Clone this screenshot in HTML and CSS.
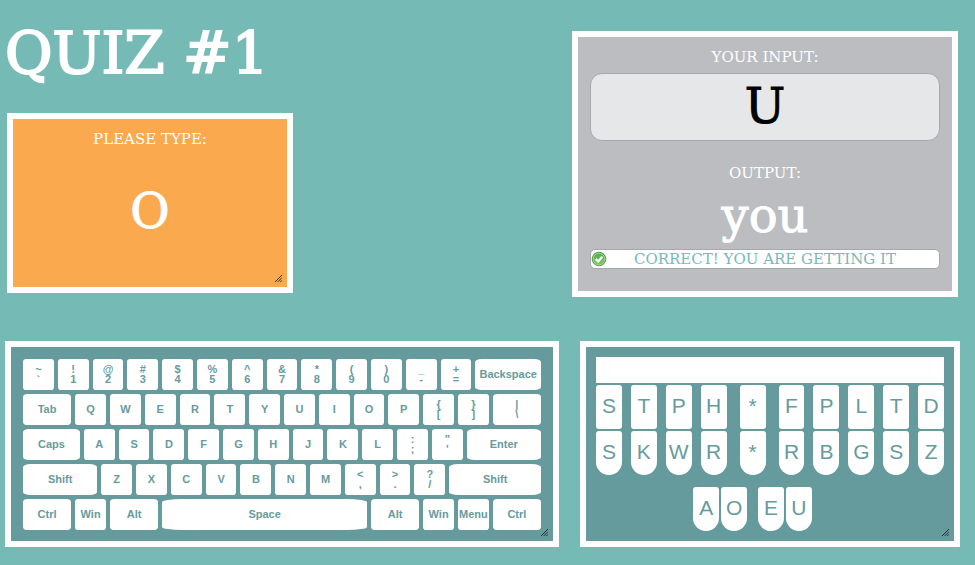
FILE: index.html
```
<!DOCTYPE html>
<html lang="en">
<head>
<meta charset="utf-8">
<title>Quiz #1</title>
<link rel="stylesheet" href="styles.css">
</head>
<body>
<main class="page">
  <section class="quiz">
    <h1 class="title">QUIZ #1</h1>
    <div class="panel prompt">
      <h2 class="caption">PLEASE TYPE:</h2>
      <p class="big">O</p>
      <svg class="grip" viewBox="0 0 8 8" aria-hidden="true"><path d="M0 8L8 0M3 8L8 3M6 8L8 6"/></svg>
    </div>
    <div class="panel answer">
      <label class="caption" for="typed">YOUR INPUT:</label>
      <input class="typed" id="typed" type="text" value="U">
      <h2 class="caption">OUTPUT:</h2>
      <output class="big word" for="typed">you</output>
      <p class="status">
        <svg class="tick" viewBox="0 0 16 16" aria-hidden="true">
          <defs><linearGradient id="green" x1="0" y1="0" x2="0" y2="1"><stop offset="0" stop-color="#4fae49"/><stop offset="1" stop-color="#84c766"/></linearGradient></defs>
          <circle cx="8" cy="8" r="6.8" fill="url(#green)" stroke="#3c8a38" stroke-width=".8"/>
          <circle cx="8" cy="8" r="5.8" fill="none" stroke="#a3d98c" stroke-width=".9"/>
          <path d="M4.7 8.1L7.2 10.4L11.4 5.8" fill="none" stroke="#fff" stroke-width="2.2"/>
        </svg>
        <span>CORRECT! YOU ARE GETTING IT</span>
      </p>
    </div>
  </section>

  <section class="boards">
    <div class="panel keyboard">
      <div class="keys">
        <button class="key">~<br>`</button><button class="key">!<br>1</button><button class="key">@<br>2</button><button class="key">#<br>3</button><button class="key">$<br>4</button><button class="key">%<br>5</button><button class="key">^<br>6</button><button class="key">&amp;<br>7</button><button class="key">*<br>8</button><button class="key">(<br>9</button><button class="key">)<br>0</button><button class="key">_<br>-</button><button class="key">+<br>=</button><button class="key u8">Backspace</button>
        <button class="key u6">Tab</button><button class="key">Q</button><button class="key">W</button><button class="key">E</button><button class="key">R</button><button class="key">T</button><button class="key">Y</button><button class="key">U</button><button class="key">I</button><button class="key">O</button><button class="key">P</button><button class="key">{<br>[</button><button class="key">}<br>]</button><button class="key u6">|<br>\</button>
        <button class="key u7">Caps</button><button class="key">A</button><button class="key">S</button><button class="key">D</button><button class="key">F</button><button class="key">G</button><button class="key">H</button><button class="key">J</button><button class="key">K</button><button class="key">L</button><button class="key">:<br>;</button><button class="key">"<br>'</button><button class="key u9">Enter</button>
        <button class="key u9">Shift</button><button class="key">Z</button><button class="key">X</button><button class="key">C</button><button class="key">V</button><button class="key">B</button><button class="key">N</button><button class="key">M</button><button class="key">&lt;<br>,</button><button class="key">&gt;<br>.</button><button class="key">?<br>/</button><button class="key u11">Shift</button>
        <button class="key u6">Ctrl</button><button class="key">Win</button><button class="key u6">Alt</button><button class="key u24">Space</button><button class="key u6">Alt</button><button class="key">Win</button><button class="key">Menu</button><button class="key u6">Ctrl</button>
      </div>
      <svg class="grip" viewBox="0 0 8 8" aria-hidden="true"><path d="M0 8L8 0M3 8L8 3M6 8L8 6"/></svg>
    </div>

    <div class="panel steno">
      <div class="number-bar"></div>
      <div class="row">
        <button class="steno-key">S</button><button class="steno-key">T</button><button class="steno-key">P</button><button class="steno-key">H</button><button class="steno-key star">*</button><button class="steno-key">F</button><button class="steno-key">P</button><button class="steno-key">L</button><button class="steno-key">T</button><button class="steno-key">D</button>
      </div>
      <div class="row">
        <button class="steno-key round">S</button><button class="steno-key round">K</button><button class="steno-key round">W</button><button class="steno-key round">R</button><button class="steno-key round star">*</button><button class="steno-key round">R</button><button class="steno-key round">B</button><button class="steno-key round">G</button><button class="steno-key round">S</button><button class="steno-key round">Z</button>
      </div>
      <div class="vowels">
        <div class="pair"><button class="steno-key round">A</button><button class="steno-key round">O</button></div>
        <div class="pair"><button class="steno-key round">E</button><button class="steno-key round">U</button></div>
      </div>
      <svg class="grip" viewBox="0 0 8 8" aria-hidden="true"><path d="M0 8L8 0M3 8L8 3M6 8L8 6"/></svg>
    </div>
  </section>
</main>
</body>
</html>
```
FILE: styles.css
```
* {
  box-sizing: border-box;
}

body {
  margin: 0;
  background: #76bab6;
  color: #fff;
  font-family: "DejaVu Serif", serif;
}

h1, h2, p {
  margin: 0;
  font-weight: normal;
}

button {
  border: 0;
  padding: 0;
  background: #fff;
  color: #669b9d;
  font-family: "Liberation Sans", Arial, sans-serif;
}

.page {
  padding: 19px 15px 18px 5px;
}

.quiz {
  display: grid;
  grid-template-columns: 286fr 279fr 386fr;
  grid-template-rows: auto 1fr;
  padding: 0 2px;
}

.title {
  grid-column: 1 / 3;
  font-size: 58px;
  line-height: 68px;
  margin: 0 0 2px -2px;
  -webkit-text-stroke: 2px #fff;
}

.panel {
  position: relative;
  border: 6px solid #fff;
}

.prompt {
  grid-column: 1;
  grid-row: 2;
  min-height: 180px;
  margin: 24px 0 4px;
  padding-top: 8px;
  background: #fba94f;
  text-align: center;
}

.answer {
  grid-column: 3;
  grid-row: 1 / 3;
  display: flex;
  flex-direction: column;
  margin-top: 12px;
  padding: 8px 12px;
  background: #bbbdc0;
  text-align: center;
}

.caption {
  font-size: 15px;
  line-height: 24px;
}

.big {
  padding-bottom: 4px;
  font-size: 48px;
  line-height: 60px;
  -webkit-text-stroke: 1px #fff;
}

.prompt .big {
  margin-top: 30px;
}

.typed {
  width: 100%;
  height: 68px;
  margin: 4px 0 20px;
  padding: 0 0 2px;
  border: 1px solid #a6a8ab;
  border-radius: 12px;
  background: #e6e7e8;
  color: #000;
  font: 48px "DejaVu Serif", serif;
  text-align: center;
  -webkit-text-stroke: 1px #000;
}

.status {
  display: flex;
  align-items: center;
  height: 20px;
  border: 1px solid #a6a8ab;
  border-radius: 5px;
  background: #fff;
  color: #76bab6;
  font-size: 15px;
  line-height: 18px;
}

.status span {
  flex: 1;
  padding-right: 16px;
}

.tick {
  width: 16px;
  height: 16px;
}

.grip {
  position: absolute;
  right: 5px;
  bottom: 5px;
  width: 7px;
  height: 7px;
  fill: none;
  stroke: #222;
}

.boards {
  display: grid;
  grid-template-columns: 554fr 380fr;
  gap: 21px;
  margin-top: 44px;
}

.keyboard,
.steno {
  background: #669b9d;
}

.keyboard {
  padding: 12px 8px 11px 12px;
}

.keys {
  display: grid;
  grid-template-columns: repeat(60, minmax(0, 1fr));
  grid-auto-rows: 31px;
  row-gap: 4px;
}

.key {
  grid-column: span 4;
  margin-right: 4px;
  padding-bottom: 2px;
  border-radius: 10%;
  font-size: 11px;
  font-weight: bold;
  line-height: 10px;
}

.u6 { grid-column: span 6; }
.u7 { grid-column: span 7; }
.u8 { grid-column: span 8; }
.u9 { grid-column: span 9; }
.u11 { grid-column: span 11; }
.u24 { grid-column: span 24; }

.steno {
  padding: 10px 10px 0;
}

.number-bar {
  height: 26px;
  background: #fff;
}

.row {
  display: flex;
  gap: 9px;
  margin-top: 2px;
}

.steno-key {
  flex: 1;
  height: 44px;
  padding-bottom: 3px;
  border-radius: 3px;
  font-size: 21px;
}

.round {
  border-radius: 3px 3px 13px 13px;
}

.star {
  margin: 0 4px;
}

.vowels {
  display: flex;
  gap: 11px;
  width: 34%;
  margin: 12px 0 0 28%;
}

.pair {
  display: flex;
  flex: 1;
  gap: 2px;
}
```
